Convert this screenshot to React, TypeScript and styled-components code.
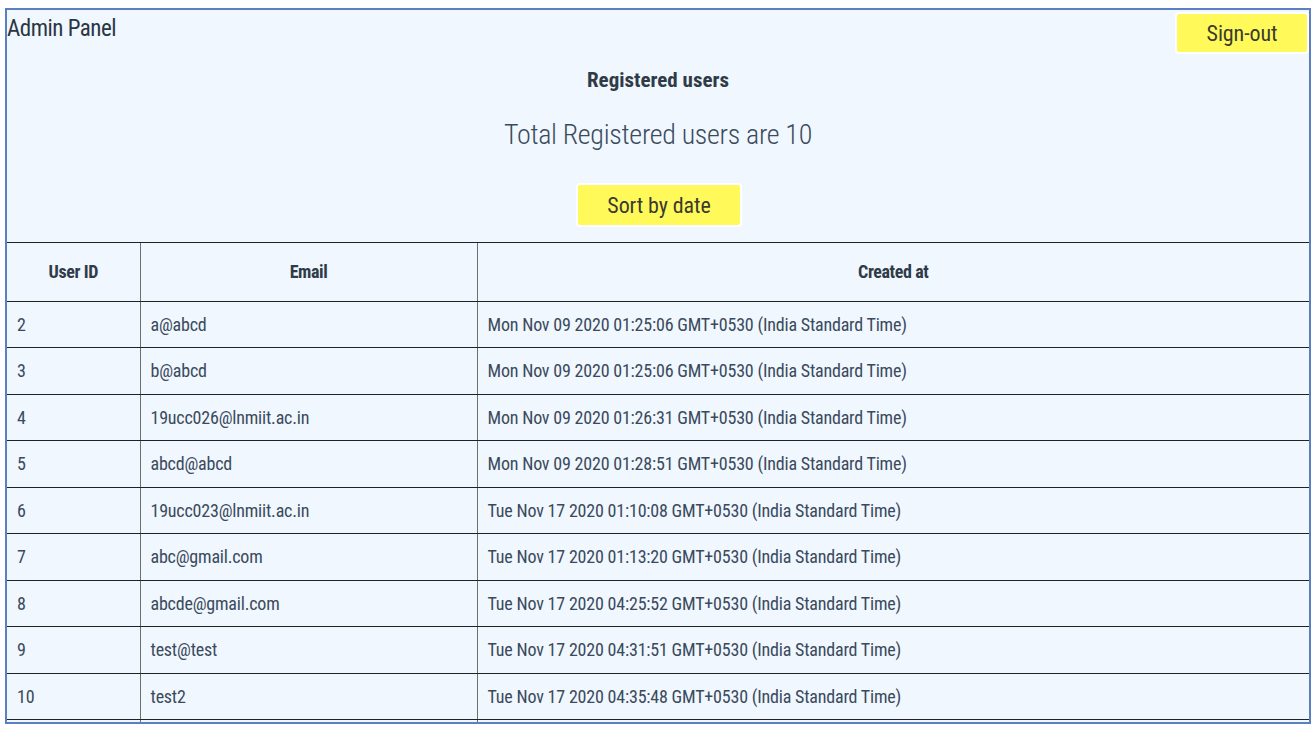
import React from "react";
import styled, { createGlobalStyle } from "styled-components";

const GlobalStyle = createGlobalStyle`
  html, body { margin: 0; padding: 0; background: #ffffff; }
  body { font-family: Roboto, "Noto Sans", "Liberation Sans", sans-serif; }
  * { box-sizing: border-box; }
`;

const Page = styled.div`
  padding: 8px 5px 0 5px;
`;

const Frame = styled.div`
  width: 1306px;
  height: 716px;
  border: 2px solid #5b7fbf;
  background: #f0f7fe;
  overflow: hidden;
  display: flex;
  flex-direction: column;
  font-stretch: 80%;
`;

const TopBar = styled.div`
  display: flex;
  justify-content: space-between;
  align-items: flex-start;
  padding: 2px 0 0 0;
`;

const Brand = styled.h1`
  margin: 3px 0 0 0;
  font-size: 23px;
  font-weight: 400;
  line-height: 28px;
  color: #2a3643;
  letter-spacing: -0.5px;
`;

const YellowButton = styled.button<{ $w: number; $h: number }>`
  width: ${(p) => p.$w}px;
  height: ${(p) => p.$h}px;
  background: #fffa5a;
  border: 2px solid #ffffff;
  border-radius: 4px;
  font-family: inherit;
  font-stretch: 80%;
  font-size: 22px;
  letter-spacing: -0.1px;
  font-weight: 400;
  color: #3a3a30;
  display: flex;
  align-items: center;
  justify-content: center;
  padding: 0;
  cursor: pointer;
`;

const SignOut = styled(YellowButton)`
  margin-right: 0;
`;

const Heading = styled.h2`
  margin: 14px 0 0 0;
  text-align: center;
  font-size: 21px;
  font-weight: 700;
  line-height: 25px;
  color: #2f3b48;
`;

const Total = styled.p`
  margin: 25px 0 0 0;
  text-align: center;
  font-size: 28px;
  letter-spacing: -0.3px;
  font-weight: 300;
  line-height: 33px;
  color: #3b4b5c;
`;

const SortRow = styled.div`
  display: flex;
  justify-content: center;
  margin-top: 32px;
  padding-left: 2px;
`;

const Table = styled.table`
  margin-top: 15px;
  width: 100%;
  border-collapse: collapse;
  table-layout: fixed;
  font-size: 18px;
  letter-spacing: -0.2px;
  color: #3a4a5c;
`;

const HeadCell = styled.th`
  height: 58.5px;
  padding: 0 10px;
  font-weight: 700;
  font-size: 18px;
  letter-spacing: -0.4px;
  color: #2f3b48;
  text-align: center;
  vertical-align: middle;
  border-top: 1px solid #222;
  border-bottom: 1px solid #222;
  border-left: 1px solid #6f6f6f;
  &:first-child { border-left: none; }
`;

const Cell = styled.td`
  height: 46.5px;
  padding: 0 10px;
  text-align: left;
  vertical-align: middle;
  white-space: nowrap;
  border-top: 1px solid #222;
  border-bottom: 1px solid #222;
  border-left: 1px solid #6f6f6f;
  &:first-child { border-left: none; }
`;

type User = { id: string; email: string; created: string };

const users: User[] = [
  { id: "2", email: "a@abcd", created: "Mon Nov 09 2020 01:25:06 GMT+0530 (India Standard Time)" },
  { id: "3", email: "b@abcd", created: "Mon Nov 09 2020 01:25:06 GMT+0530 (India Standard Time)" },
  { id: "4", email: "19ucc026@lnmiit.ac.in", created: "Mon Nov 09 2020 01:26:31 GMT+0530 (India Standard Time)" },
  { id: "5", email: "abcd@abcd", created: "Mon Nov 09 2020 01:28:51 GMT+0530 (India Standard Time)" },
  { id: "6", email: "19ucc023@lnmiit.ac.in", created: "Tue Nov 17 2020 01:10:08 GMT+0530 (India Standard Time)" },
  { id: "7", email: "abc@gmail.com", created: "Tue Nov 17 2020 01:13:20 GMT+0530 (India Standard Time)" },
  { id: "8", email: "abcde@gmail.com", created: "Tue Nov 17 2020 04:25:52 GMT+0530 (India Standard Time)" },
  { id: "9", email: "test@test", created: "Tue Nov 17 2020 04:31:51 GMT+0530 (India Standard Time)" },
  { id: "10", email: "test2", created: "Tue Nov 17 2020 04:35:48 GMT+0530 (India Standard Time)" },
  { id: "", email: "", created: "" },
];

export default function App() {
  return (
    <Page>
      <GlobalStyle />
      <Frame>
        <TopBar>
          <Brand>Admin Panel</Brand>
          <SignOut $w={134} $h={42}>Sign-out</SignOut>
        </TopBar>
        <Heading>Registered users</Heading>
        <Total>Total Registered users are 10</Total>
        <SortRow>
          <YellowButton $w={166} $h={44}>Sort by date</YellowButton>
        </SortRow>
        <Table>
          <colgroup>
            <col style={{ width: 133 }} />
            <col style={{ width: 337 }} />
            <col />
          </colgroup>
          <thead>
            <tr>
              <HeadCell>User ID</HeadCell>
              <HeadCell>Email</HeadCell>
              <HeadCell>Created at</HeadCell>
            </tr>
          </thead>
          <tbody>
            {users.map((u, i) => (
              <tr key={i}>
                <Cell>{u.id}</Cell>
                <Cell>{u.email}</Cell>
                <Cell>{u.created}</Cell>
              </tr>
            ))}
          </tbody>
        </Table>
      </Frame>
    </Page>
  );
}
